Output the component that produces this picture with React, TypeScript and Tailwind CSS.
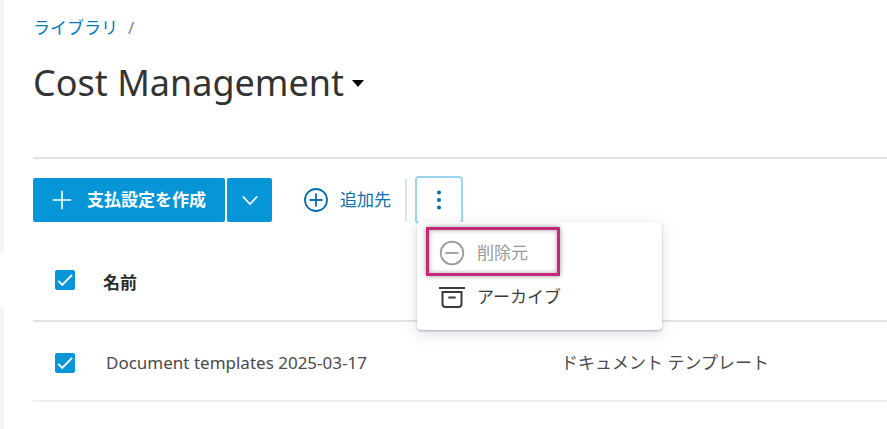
import { useState } from "react";

function Check({ label }: { label: string }) {
  const [on, setOn] = useState(true);
  return (
    <label className="grid size-5 cursor-pointer">
      <input
        type="checkbox"
        aria-label={label}
        checked={on}
        onChange={() => setOn(!on)}
        className="col-start-1 row-start-1 size-5 appearance-none rounded-xs border border-[#0696d7] bg-white checked:bg-[#0696d7]"
      />
      {on && (
        <svg viewBox="0 0 20 20" className="pointer-events-none col-start-1 row-start-1 size-5" fill="none" stroke="#fff" strokeWidth="1.9">
          <path d="M3.3 10.8 7.3 14.8 17 4.8" />
        </svg>
      )}
    </label>
  );
}

function CreateButtons() {
  return (
    <div className="flex h-11 gap-0.5 text-white">
      <button type="button" className="flex w-48 items-center rounded-xs bg-[#0696d7] pl-[19px] text-[17px] font-bold">
        <svg viewBox="0 0 20 20" className="mr-[15px] size-5" fill="none" stroke="currentColor" strokeWidth="1.6">
          <path d="M10 .8v18.4M.8 10h18.4" />
        </svg>
        支払設定を作成
      </button>
      <button type="button" aria-label="その他の作成オプション" className="flex w-[45px] items-center justify-center rounded-xs bg-[#0696d7]">
        <svg viewBox="0 0 16 16" className="size-4" fill="none" stroke="currentColor" strokeWidth="1.6">
          <path d="M.8 4.5 8 12 15.2 4.5" />
        </svg>
      </button>
    </div>
  );
}

function MoreMenu() {
  return (
    <div className="relative ml-2">
      <button
        type="button"
        aria-label="その他"
        aria-haspopup="menu"
        aria-expanded="true"
        className="flex size-12 items-center justify-center rounded-sm border-2 border-[#9bd5ef] bg-white text-[#006eaf]"
      >
        <svg viewBox="0 0 20 20" className="size-5" fill="currentColor">
          <circle cx="10" cy="2.6" r="2" />
          <circle cx="10" cy="10" r="2" />
          <circle cx="10" cy="17.4" r="2" />
        </svg>
      </button>
      <div
        role="menu"
        className="absolute top-[46px] left-0.5 z-10 flex w-[245px] flex-col rounded-sm bg-white pt-[5px] pr-2 pb-2 pl-[9px] text-[17px] shadow-[0_1px_2px_rgba(60,70,90,0.35),0_4px_14px_rgba(60,80,120,0.18)]"
      >
        <button
          type="button"
          role="menuitem"
          disabled
          className="flex h-[49px] w-[134px] items-center gap-3 border-3 border-[#c3297b] pt-1 pl-2.5 text-[#999] shadow-[0_0_5px_rgba(0,0,0,0.4),inset_0_0_5px_rgba(0,0,0,0.35)]"
        >
          <svg viewBox="0 0 26 26" className="size-[26px]" fill="none" stroke="currentColor" strokeWidth="1.8">
            <circle cx="13" cy="13" r="11.3" />
            <path d="M6.5 13h13" />
          </svg>
          削除元
        </button>
        <button type="button" role="menuitem" className="flex h-[46px] items-center gap-3 pr-2 pb-1 pl-[13px] text-[#3c3c3c]">
          <svg viewBox="0 0 26 26" className="size-[26px]" fill="none" stroke="currentColor" strokeWidth="2">
            <path d="M0 4h26M3.5 8h19v12a3 3 0 0 1-3 3h-13a3 3 0 0 1-3-3zM9.3 13.5h7.4" />
          </svg>
          アーカイブ
        </button>
      </div>
    </div>
  );
}

export default function App() {
  return (
    <div className="flex min-h-screen bg-white font-['Noto_Sans','Noto_Sans_CJK_JP',sans-serif] text-[#4a4a4a]">
      <div className="flex w-1 shrink-0 flex-col">
        <div className="h-[252px] bg-[#f5f5f5]" />
        <div className="h-[54px]" />
        <div className="grow bg-[#f5f5f5]" />
      </div>
      <main className="min-w-0 grow pl-[29px]">
        <nav className="flex h-14 items-center gap-2.5 text-[17px]">
          <a href="#library" className="text-[#0a78bd]">ライブラリ</a>
          <span className="text-[#808080]">/</span>
        </nav>
        <h1 className="flex h-[54px] items-center text-4xl text-[#333]">
          <button type="button" className="flex items-center gap-2 whitespace-nowrap">
            Cost Management
            <svg viewBox="0 0 12 7" className="h-[7px] w-3 fill-black">
              <path d="M0 0h12L6 7z" />
            </svg>
          </button>
        </h1>
        <div className="mt-[47px] flex h-[84px] items-center border-t-2 border-[#e3e3e3] pb-px">
          <CreateButtons />
          <button type="button" className="ml-8 flex items-center gap-3 text-[17px] text-[#0a6ead]">
            <svg viewBox="0 0 24 24" className="size-6" fill="none" stroke="currentColor" strokeWidth="1.8">
              <circle cx="12" cy="12" r="11" />
              <path d="M12 5.5v13M5.5 12h13" />
            </svg>
            追加先
          </button>
          <div className="ml-3.5 h-11 w-0.5 bg-[#e3e3e3]" />
          <MoreMenu />
        </div>
        <table className="w-full table-fixed border-collapse text-left text-[17px]">
          <colgroup>
            <col className="w-[51px]" />
            <col className="w-[455px]" />
            <col />
          </colgroup>
          <thead>
            <tr className="h-20 border-b-2 border-[#e3e3e3]">
              <th className="pb-0.5 pl-[22px]"><Check label="すべて選択" /></th>
              <th className="pt-1 pl-[19px] font-bold text-[#2b2b2b]">名前</th>
              <th />
            </tr>
          </thead>
          <tbody>
            <tr className="h-20 border-b-2 border-[#f0f0f0]">
              <td className="pt-[3px] pl-[22px]"><Check label="Document templates 2025-03-17 を選択" /></td>
              <td className="pt-[3px] pl-[22px]">Document templates 2025-03-17</td>
              <td className="pt-[3px] pl-[22px]">ドキュメント テンプレート</td>
            </tr>
          </tbody>
        </table>
      </main>
    </div>
  );
}
